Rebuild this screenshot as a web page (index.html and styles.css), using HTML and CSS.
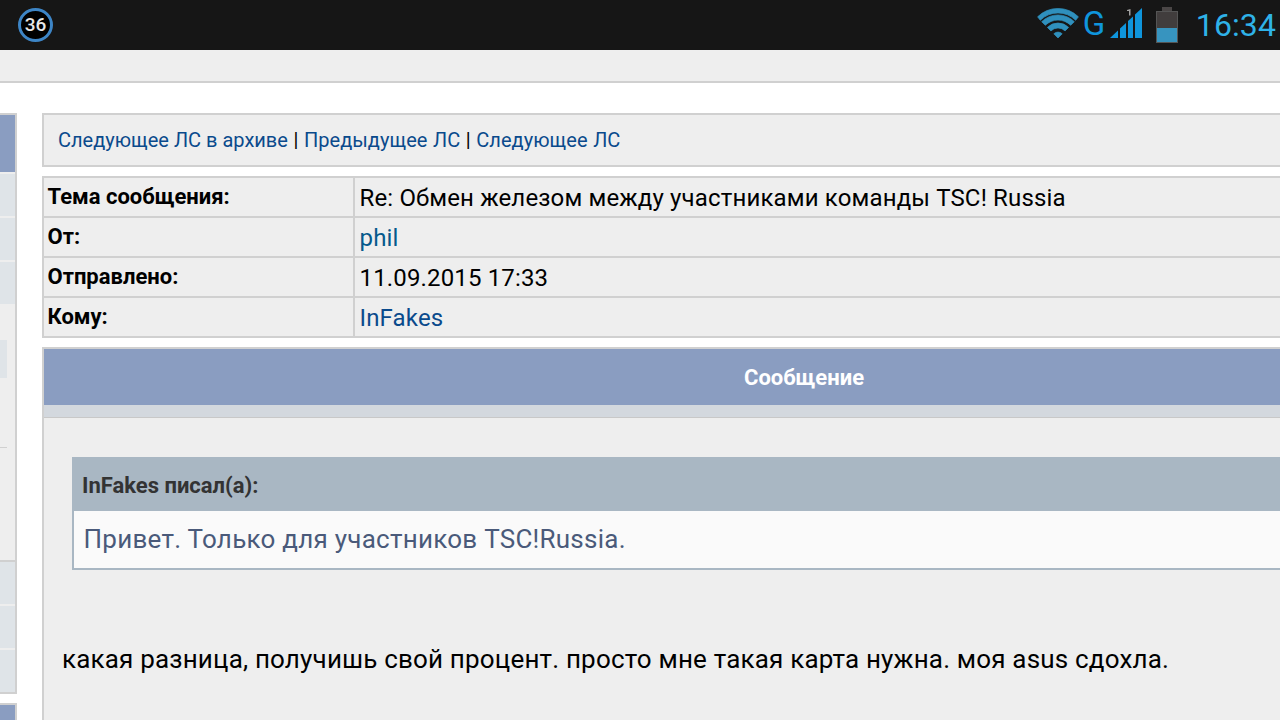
FILE: index.html
```html
<!DOCTYPE html>
<html lang="ru">
<head>
    <meta charset="UTF-8">
    <title>Личное сообщение</title>
    <link rel="stylesheet" href="styles.css">
</head>
<body>
    <div class="statusbar">
        <div class="badge">36</div>
        <div class="status-icons">
            <svg class="wifi" width="42" height="31" viewBox="0 0 42 31">
                <path d="M21 30 L16.8 25.8 A6 6 0 0 1 25.2 25.8 Z"/>
                <path d="M10.4 19.4 A15 15 0 0 1 31.6 19.4 L28.1 22.9 A10 10 0 0 0 13.9 22.9 Z"/>
                <path d="M4.7 13.7 A23 23 0 0 1 37.3 13.7 L33.7 17.3 A18 18 0 0 0 8.3 17.3 Z"/>
                <path d="M0.6 8.8 A29 29 0 0 1 41.4 8.8 L38.7 12.3 A25 25 0 0 0 3.3 12.3 Z"/>
            </svg>
            <span class="net">G</span>
            <svg class="signal" width="32" height="30" viewBox="0 0 32 30">
                <path d="M0 30 L8 22.5 V30 Z" fill="#0f95dc"/>
                <path d="M10 20.6 L16 15 V30 H10 Z" fill="#0f95dc"/>
                <path d="M18 13.1 L23 8.4 V30 H18 Z" fill="#0f95dc"/>
                <path d="M25 6.6 L32 0 V30 H25 Z" fill="#0f95dc"/>
                <path d="M17 2 L20.5 1 V7.5 H19 V3 H17 Z" fill="#a0a0a0"/>
            </svg>
            <div class="battery">
                <div class="battery-cap"></div>
                <div class="battery-body"><div class="battery-level"></div></div>
            </div>
            <span class="clock">16:34</span>
        </div>
    </div>

    <div class="toolbar"></div>

    <div class="page">
        <div class="sidebar">
            <div class="side-box">
                <div class="side-head"></div>
                <div class="side-row"></div>
                <div class="side-row"></div>
                <div class="side-row"></div>
                <div class="side-light">
                    <div class="side-mark"></div>
                    <div class="side-line"></div>
                </div>
                <div class="side-row"></div>
                <div class="side-row"></div>
                <div class="side-row"></div>
            </div>
            <div class="side-box side-next">
                <div class="side-head"></div>
            </div>
        </div>

        <div class="content">
            <div class="pm-nav">
                <a href="#" class="nav-first">Следующее ЛС в архиве</a> | <a href="#">Предыдущее ЛС</a> | <a href="#">Следующее ЛС</a>
            </div>

            <div class="pm-info">
                <div class="info-row">
                    <div class="info-label">Тема сообщения:</div>
                    <div class="info-value">Re: Обмен железом между участниками команды TSC! Russia</div>
                </div>
                <div class="info-row">
                    <div class="info-label">От:</div>
                    <div class="info-value"><a href="#" class="user">phil</a></div>
                </div>
                <div class="info-row">
                    <div class="info-label">Отправлено:</div>
                    <div class="info-value">11.09.2015 17:33</div>
                </div>
                <div class="info-row">
                    <div class="info-label">Кому:</div>
                    <div class="info-value"><a href="#">InFakes</a></div>
                </div>
            </div>

            <div class="pm-message">
                <div class="message-head">Сообщение</div>
                <div class="message-strip"></div>
                <div class="message-body">
                    <div class="quote">
                        <div class="quote-head">InFakes писал(а):</div>
                        <div class="quote-text">Привет. Только для участников TSC!Russia.</div>
                    </div>
                    <p class="message-text">какая разница, получишь свой процент. просто мне такая карта нужна. моя asus сдохла.</p>
                </div>
            </div>
        </div>
    </div>
</body>
</html>
```

FILE: styles.css
```css
html, body {
    height: 720px;
    overflow: hidden;
}
body {
    margin: 0;
    background: white;
    font-family: Roboto, "Liberation Sans", sans-serif;
    color: black;
}
a {
    color: #0a4a8c;
    text-decoration: none;
}
a.user {
    color: #05598c;
}

.statusbar {
    height: 50px;
    background: #161616;
    display: flex;
    justify-content: space-between;
    align-items: center;
    padding: 0 4px 0 18px;
}
.badge {
    width: 29px;
    height: 28px;
    border: 3px solid #3d85c6;
    border-radius: 50%;
    background: black;
    color: #e8e8e8;
    font-size: 19px;
    font-weight: 500;
    line-height: 28px;
    text-align: center;
}
.status-icons {
    display: flex;
    align-items: center;
}
.wifi {
    margin-right: 4px;
    margin-bottom: 3px;
}
.wifi path {
    fill: #2f90bd;
    stroke: #2f90bd;
    stroke-width: 0.7;
    stroke-linejoin: round;
}
.net {
    width: 22px;
    margin-right: 5px;
    margin-bottom: 3px;
    color: #0f95dc;
    font-size: 33px;
    line-height: 32px;
}
.signal {
    margin-right: 14px;
    margin-bottom: 4px;
}
.battery {
    width: 22px;
    margin-right: 18px;
}
.battery-cap {
    width: 10px;
    height: 4px;
    margin: 0 auto;
    background: #4a4646;
}
.battery-body {
    height: 32px;
    box-sizing: border-box;
    border: 1px solid #555;
    background: #413d3d;
    display: flex;
    align-items: flex-end;
}
.battery-level {
    width: 100%;
    height: 14px;
    background: #3794bf;
}
.clock {
    color: #2fb2e8;
    font-size: 32px;
    font-weight: 400;
    line-height: 34px;
    letter-spacing: 0.1px;
}

.toolbar {
    height: 31px;
    background: #eeeeee;
    border-bottom: 2px solid #d0d0d0;
}

.page {
    display: flex;
    padding-top: 30px;
}
.sidebar {
    width: 17px;
    flex-shrink: 0;
    margin-right: 25px;
}
.side-box {
    border: solid #d0d0d0;
    border-width: 2px 2px 2px 0;
    background: #eeeeee;
}
.side-next {
    margin-top: 9px;
}
.side-head {
    height: 57px;
    background: #8a9dc1;
}
.side-row {
    height: 42px;
    margin-top: 2px;
    background: #dfe4e8;
}
.side-light {
    height: 256px;
    margin-top: 2px;
    margin-bottom: -2px;
    padding-top: 34px;
    box-sizing: border-box;
    border-bottom: 2px solid #d0d0d0;
}
.side-mark {
    width: 7px;
    height: 38px;
    background: #dfe4e8;
}
.side-line {
    width: 7px;
    height: 1px;
    margin-top: 69px;
    background: #d0d0d0;
}

.content {
    width: 1400px;
    flex-shrink: 0;
}
.pm-nav {
    height: 50px;
    padding-left: 14px;
    border: 2px solid #d0d0d0;
    background: #eeeeee;
    font-size: 20px;
    line-height: 50px;
    letter-spacing: 0.05px;
    word-spacing: 0.5px;
}
.nav-first {
    letter-spacing: 0;
    word-spacing: 0;
}
.pm-info {
    margin-top: 9px;
    border: 2px solid #d0d0d0;
    border-bottom: 0;
    background: #eeeeee;
}
.info-row {
    display: flex;
    height: 38px;
    border-bottom: 2px solid #d0d0d0;
}
.info-label {
    width: 311px;
    padding-left: 3.5px;
    box-sizing: border-box;
    border-right: 2px solid #d0d0d0;
    font-size: 22px;
    font-weight: 700;
    line-height: 38px;
}
.info-value {
    padding-left: 4.5px;
    font-size: 24px;
    line-height: 40px;
    letter-spacing: 0.15px;
}
.pm-message {
    margin-top: 9px;
    height: 400px;
    border: 2px solid #d0d0d0;
    background: #eeeeee;
}
.message-head {
    height: 56px;
    padding-left: 700px;
    background: #8a9dc1;
    color: white;
    font-size: 22px;
    font-weight: 700;
    line-height: 58px;
}
.message-strip {
    height: 12px;
    background: #d3d8de;
    border-bottom: 1px solid #c8c8c8;
}
.message-body {
    padding: 39px 28px 0;
}
.quote {
    border: 2px solid #a9b7c3;
    border-top: 0;
}
.quote-head {
    height: 54px;
    margin: 0 -2px;
    padding-left: 10px;
    background: #a9b7c3;
    color: #333333;
    font-size: 22px;
    font-weight: 700;
    line-height: 57px;
}
.quote-text {
    height: 57px;
    padding-left: 9.5px;
    background: #fafafa;
    color: #4a5a7a;
    font-size: 26px;
    line-height: 56px;
    letter-spacing: 0.25px;
}
.message-text {
    margin: 69px 0 0 -10px;
    font-size: 26px;
    line-height: 40px;
    letter-spacing: 0.18px;
}
```
